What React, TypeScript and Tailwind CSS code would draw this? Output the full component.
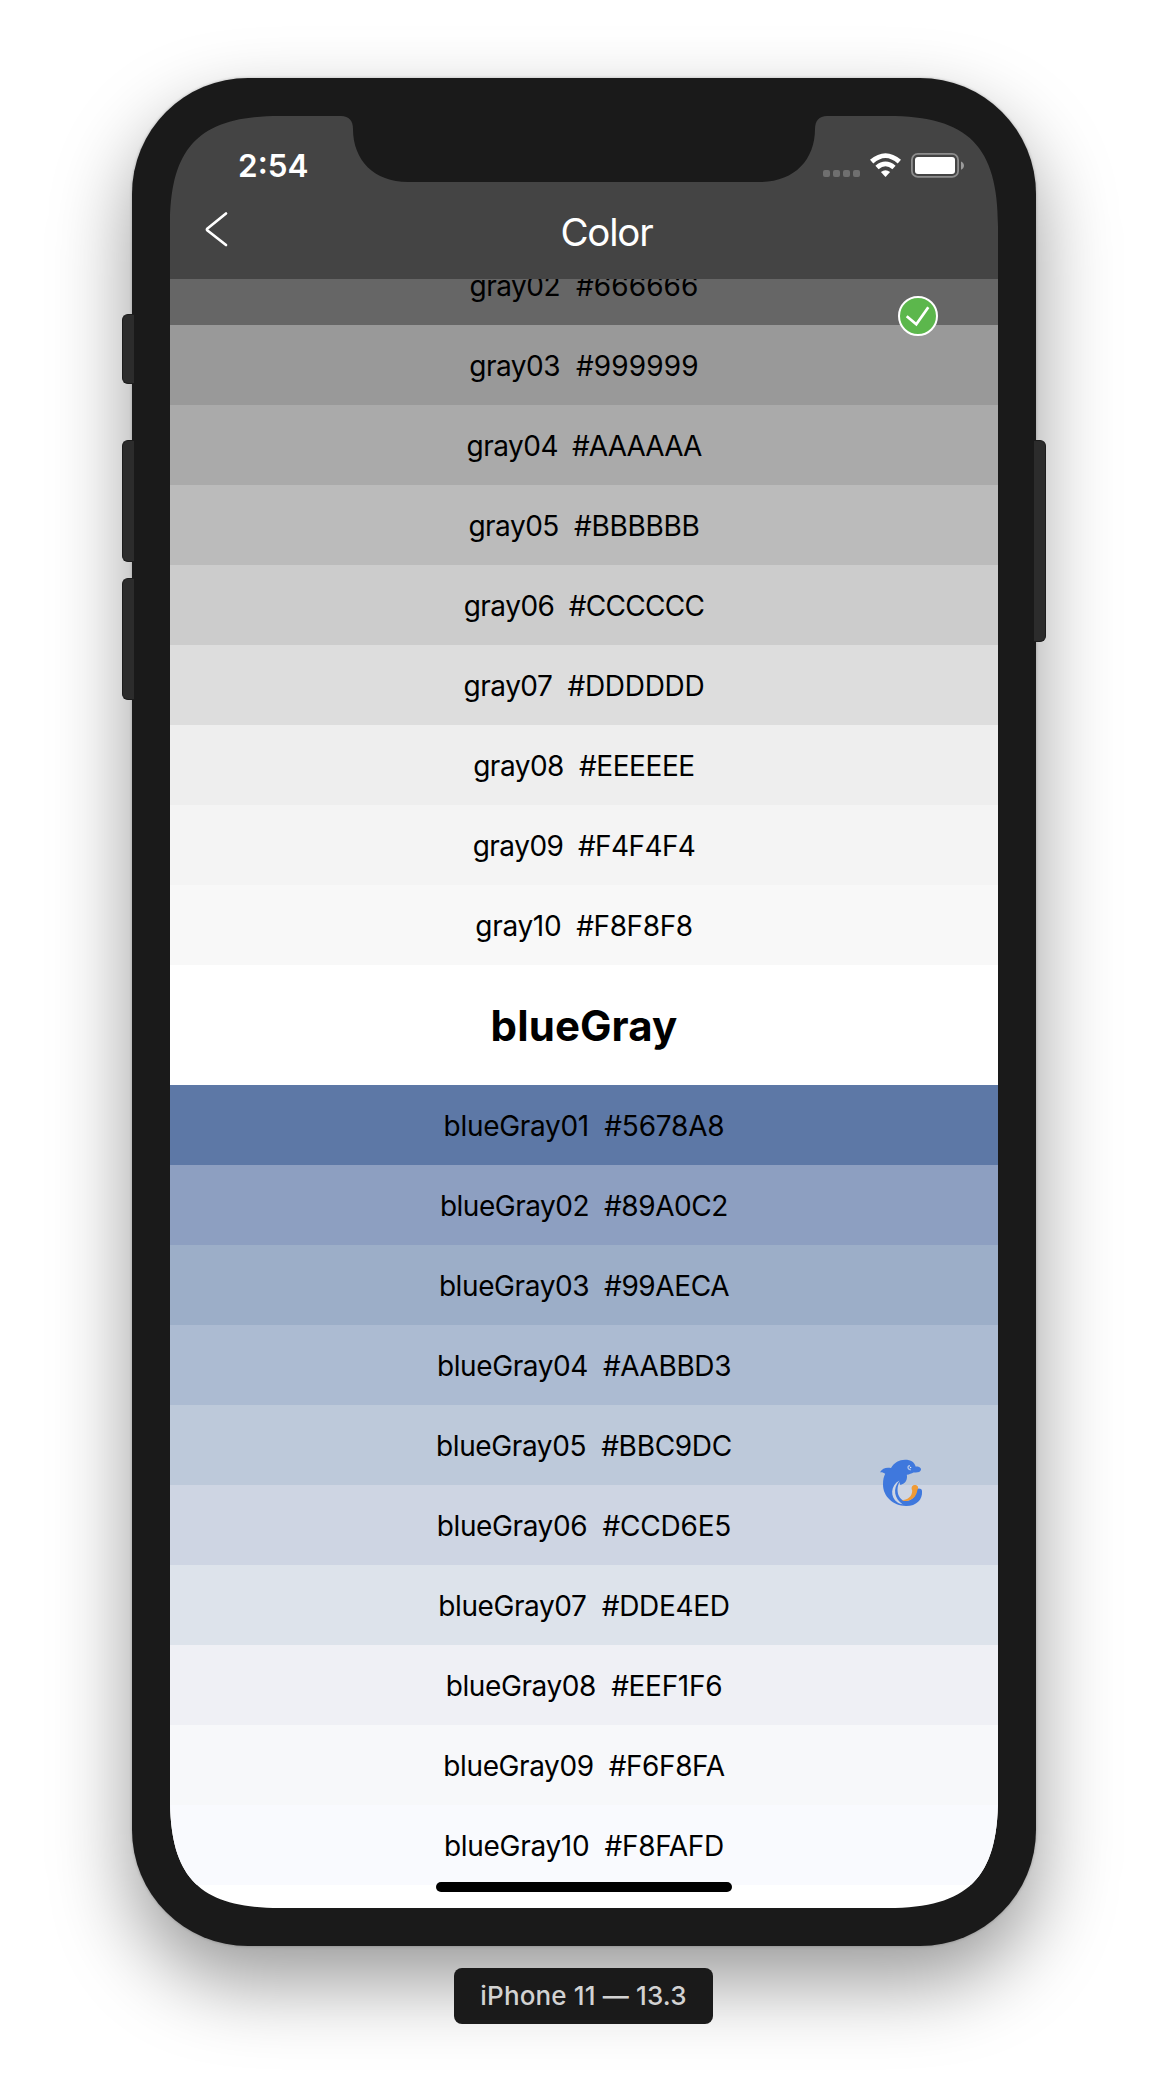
type Swatch = { name: string; hex: string; bg: string; nameTracking: string; hexTracking: string };

const grays: Swatch[] = [
  { name: 'gray02', hex: '#666666', bg: 'bg-[#666666]', nameTracking: 'tracking-[-0.5px]', hexTracking: 'tracking-[0.1px]' },
  { name: 'gray03', hex: '#999999', bg: 'bg-[#999999]', nameTracking: 'tracking-[-0.5px]', hexTracking: 'tracking-[0.1px]' },
  { name: 'gray04', hex: '#AAAAAA', bg: 'bg-[#aaaaaa]', nameTracking: 'tracking-[-0.5px]', hexTracking: 'tracking-[-0.9px]' },
  { name: 'gray05', hex: '#BBBBBB', bg: 'bg-[#bbbbbb]', nameTracking: 'tracking-[-0.5px]', hexTracking: 'tracking-[-0.3px]' },
  { name: 'gray06', hex: '#CCCCCC', bg: 'bg-[#cccccc]', nameTracking: 'tracking-[-0.5px]', hexTracking: 'tracking-[-0.7px]' },
  { name: 'gray07', hex: '#DDDDDD', bg: 'bg-[#dddddd]', nameTracking: 'tracking-[-0.5px]', hexTracking: 'tracking-[-0.3px]' },
  { name: 'gray08', hex: '#EEEEEE', bg: 'bg-[#eeeeee]', nameTracking: 'tracking-[-0.5px]', hexTracking: 'tracking-[-0.4px]' },
  { name: 'gray09', hex: '#F4F4F4', bg: 'bg-[#f4f4f4]', nameTracking: 'tracking-[-0.5px]', hexTracking: 'tracking-[-0.6px]' },
  { name: 'gray10', hex: '#F8F8F8', bg: 'bg-[#f8f8f8]', nameTracking: 'tracking-[-0.3px]', hexTracking: 'tracking-[-0.4px]' },
];

const blueGrays: Swatch[] = [
  { name: 'blueGray01', hex: '#5678A8', bg: 'bg-[#5d78a6]', nameTracking: 'tracking-[-0.3px]', hexTracking: 'tracking-[-0.2px]' },
  { name: 'blueGray02', hex: '#89A0C2', bg: 'bg-[#8d9fc1]', nameTracking: 'tracking-[-0.5px]', hexTracking: 'tracking-[-0.4px]' },
  { name: 'blueGray03', hex: '#99AECA', bg: 'bg-[#9caec8]', nameTracking: 'tracking-[-0.4px]', hexTracking: 'tracking-[-0.4px]' },
  { name: 'blueGray04', hex: '#AABBD3', bg: 'bg-[#acbbd2]', nameTracking: 'tracking-[-0.4px]', hexTracking: 'tracking-[-0.4px]' },
  { name: 'blueGray05', hex: '#BBC9DC', bg: 'bg-[#bdc9da]', nameTracking: 'tracking-[-0.4px]', hexTracking: 'tracking-[-0.3px]' },
  { name: 'blueGray06', hex: '#CCD6E5', bg: 'bg-[#ced5e3]', nameTracking: 'tracking-[-0.4px]', hexTracking: 'tracking-[-0.2px]' },
  { name: 'blueGray07', hex: '#DDE4ED', bg: 'bg-[#dde3eb]', nameTracking: 'tracking-[-0.4px]', hexTracking: 'tracking-[-0.3px]' },
  { name: 'blueGray08', hex: '#EEF1F6', bg: 'bg-[#eff0f5]', nameTracking: 'tracking-[-0.4px]', hexTracking: 'tracking-[-0.3px]' },
  { name: 'blueGray09', hex: '#F6F8FA', bg: 'bg-[#f7f8fa]', nameTracking: 'tracking-[-0.4px]', hexTracking: 'tracking-[-0.4px]' },
  { name: 'blueGray10', hex: '#F8FAFD', bg: 'bg-[#f9fafe]', nameTracking: 'tracking-[-0.3px]', hexTracking: 'tracking-[-0.3px]' },
];

function Row({ name, hex, bg, nameTracking, hexTracking }: Swatch) {
  return (
    <div className={`flex h-20 shrink-0 items-center justify-center whitespace-pre pt-[2px] text-[28px] leading-none text-black ${bg}`}>
      <span className={nameTracking}>{name}</span>
      <span className={hexTracking}>{`  ${hex}`}</span>
    </div>
  );
}

function StatusIcons() {
  return (
    <svg className="h-[26px] w-[142px]" viewBox="0 0 142 26" fill="none">
      {[0, 10, 20, 30].map((x) => (
        <rect key={x} x={x} y="17" width="7" height="7" rx="2" fill="#6f6f6f" />
      ))}
      <path d="M47 6.8 Q62.5 -6.4 78 6.8 L74.7 10.4 Q62.5 -0.6 50.3 10.4 Z" fill="#fff" />
      <path d="M52.4 12.8 Q62.5 4.4 72.6 12.8 L69.4 16.2 Q62.5 10.2 55.6 16.2 Z" fill="#fff" />
      <path d="M57.9 18.9 Q62.5 15.4 67.1 18.9 L62.5 24 Z" fill="#fff" />
      <rect x="88.9" y="0.9" width="46.2" height="23" rx="6" stroke="#8d8d8d" strokeWidth="1.8" />
      <rect x="92" y="4" width="40" height="17" rx="3" fill="#fff" />
      <path d="M138 8.4 C142 10 142 15 138 16.8 Z" fill="#9b9b9b" />
    </svg>
  );
}

function Dolphin() {
  return (
    <svg className="absolute left-[710px] top-[1343px] h-[48px] w-[44px]" viewBox="0 0 44 48">
      <path
        fill="#3f78dd"
        d="M0 13.2C2.5 9.3 6 8 11 9C14.5 3.5 19 0.8 25 0.8C31 0.8 34.6 3.4 35.6 7.6C38.5 7.2 41.4 8.6 41 10.8C40.4 13.8 36.5 13.6 33.5 13.4C31.5 14.4 29.5 15.2 26.8 15.8C27.8 20.4 25.5 24.8 20.4 26C19.8 24.8 19.6 24 19.6 23C16.8 27.5 16.8 34.5 20 38.8C21.5 40.8 23.5 42.2 25.5 42C31 41.8 36 38 35.9 32C36.2 28.6 41.8 29 42 32C42.8 41 36 47.2 26 47C13 46.6 3 37.5 3 25.5C3 20.5 3.8 17.6 5.2 14.8C3.8 13.4 2 13 0 13.2Z"
      />
      <path fill="#ced5e3" d="M19.4 21.6C10.4 26.4 9.8 38.4 17.6 43.6C19.4 44.7 21 45.2 22.8 45.4C14.4 40 12.2 30 19.4 21.6Z" />
      <path fill="#f09b36" d="M21.4 41.2C27.5 41.2 32.4 37.4 32.2 31.5C30.8 28.6 32 26 34.9 26C37.8 26 39 28.6 37.4 31C36.4 38.5 30 43.9 21.4 41.2Z" />
      <path d="M30 6.6C27.4 6.8 27 10.3 30.7 10.8" fill="none" stroke="#b4c7e8" strokeWidth="1.2" />
      <circle cx="30.6" cy="8.5" r="0.7" fill="#dfe8f6" />
    </svg>
  );
}

export default function App() {
  return (
    <div className="flex h-[2096px] w-[1168px] flex-col items-center overflow-hidden bg-white pt-[78px] font-['Inter',sans-serif]">
      <div className="relative h-[1868px] w-[904px] shrink-0 rounded-[116px] bg-[#1a1a1a] p-[38px] shadow-[0_36px_80px_rgba(0,0,0,0.4),0_0_3px_rgba(0,0,0,0.25)]">
        <div className="absolute -left-[10px] top-[236px] h-[70px] w-3 rounded-l-[6px] border border-r-0 border-[#1c1c1c] bg-[#2c2c2c]" />
        <div className="absolute -left-[10px] top-[362px] h-[122px] w-3 rounded-l-[6px] border border-r-0 border-[#1c1c1c] bg-[#2c2c2c]" />
        <div className="absolute -left-[10px] top-[500px] h-[122px] w-3 rounded-l-[6px] border border-r-0 border-[#1c1c1c] bg-[#2c2c2c]" />
        <div className="absolute -right-[10px] top-[362px] h-[202px] w-3 rounded-r-[6px] border border-l-0 border-[#1c1c1c] bg-[#2c2c2c]" />

        <div className="relative flex h-[1792px] w-[828px] flex-col overflow-hidden [clip-path:path('M0_110C0_30_30_0_110_0H171C179_0_183_5_183_13C183_44_204_66_238_66H590C624_66_645_44_645_13C645_5_649_0_657_0H718C798_0_828_30_828_110V1682C828_1762_798_1792_718_1792H110C30_1792_0_1762_0_1682Z')]">
          <header className="flex h-[163px] shrink-0 flex-col bg-[#444444] text-white">
            <div className="flex h-[75px] items-end justify-between pl-[68px] pr-[33px]">
              <span className="pb-[10px] text-[31.5px] font-semibold leading-none">2:54</span>
              <div className="mb-[12px] flex">
                <StatusIcons />
              </div>
            </div>
            <div className="relative flex h-[88px] items-center justify-center pb-[6px] pl-[45px]">
              <svg className="absolute left-[34px] top-[18px] h-[40px] w-[26px]" viewBox="0 0 26 40" fill="none">
                <path d="M22 4.5L3.5 19.5Q2.5 20.5 3.5 21.5L22 36" stroke="#fff" strokeWidth="2.7" strokeLinecap="round" strokeLinejoin="round" />
              </svg>
              <h1 className="text-[38.5px] leading-none tracking-[-1.2px]">Color</h1>
            </div>
          </header>
          <main className="flex h-[1606px] shrink-0 flex-col justify-end overflow-hidden bg-white">
            {grays.map((s) => (
              <Row key={s.name} {...s} />
            ))}
            <h2 className="flex h-[120px] shrink-0 items-center justify-center pt-[2px] text-[42px] font-bold leading-none tracking-[0.1px] text-black">
              blueGray
            </h2>
            {blueGrays.map((s) => (
              <Row key={s.name} {...s} />
            ))}
          </main>
          <div className="h-[23px] shrink-0 bg-white" />

          <svg className="absolute left-[728px] top-[180px] h-10 w-10" viewBox="0 0 40 40" fill="none">
            <circle cx="20" cy="20" r="19" fill="#5cb74c" stroke="#fff" strokeWidth="2" />
            <path d="M8.7 20.2L18.3 28.3L30.3 11.3" stroke="#fff" strokeWidth="2.7" />
          </svg>
          <Dolphin />
          <div className="absolute left-[266px] top-[1766px] h-[10px] w-[296px] rounded-full bg-black" />
        </div>
      </div>
      <div className="relative mr-px mt-[22px] flex h-[56px] w-[259px] shrink-0 items-center justify-center rounded-lg bg-[#1a1a1a] text-[26px] font-medium leading-none tracking-[0.15px] text-[#d2d2d2]">
        iPhone 11 — 13.3
      </div>
    </div>
  );
}
